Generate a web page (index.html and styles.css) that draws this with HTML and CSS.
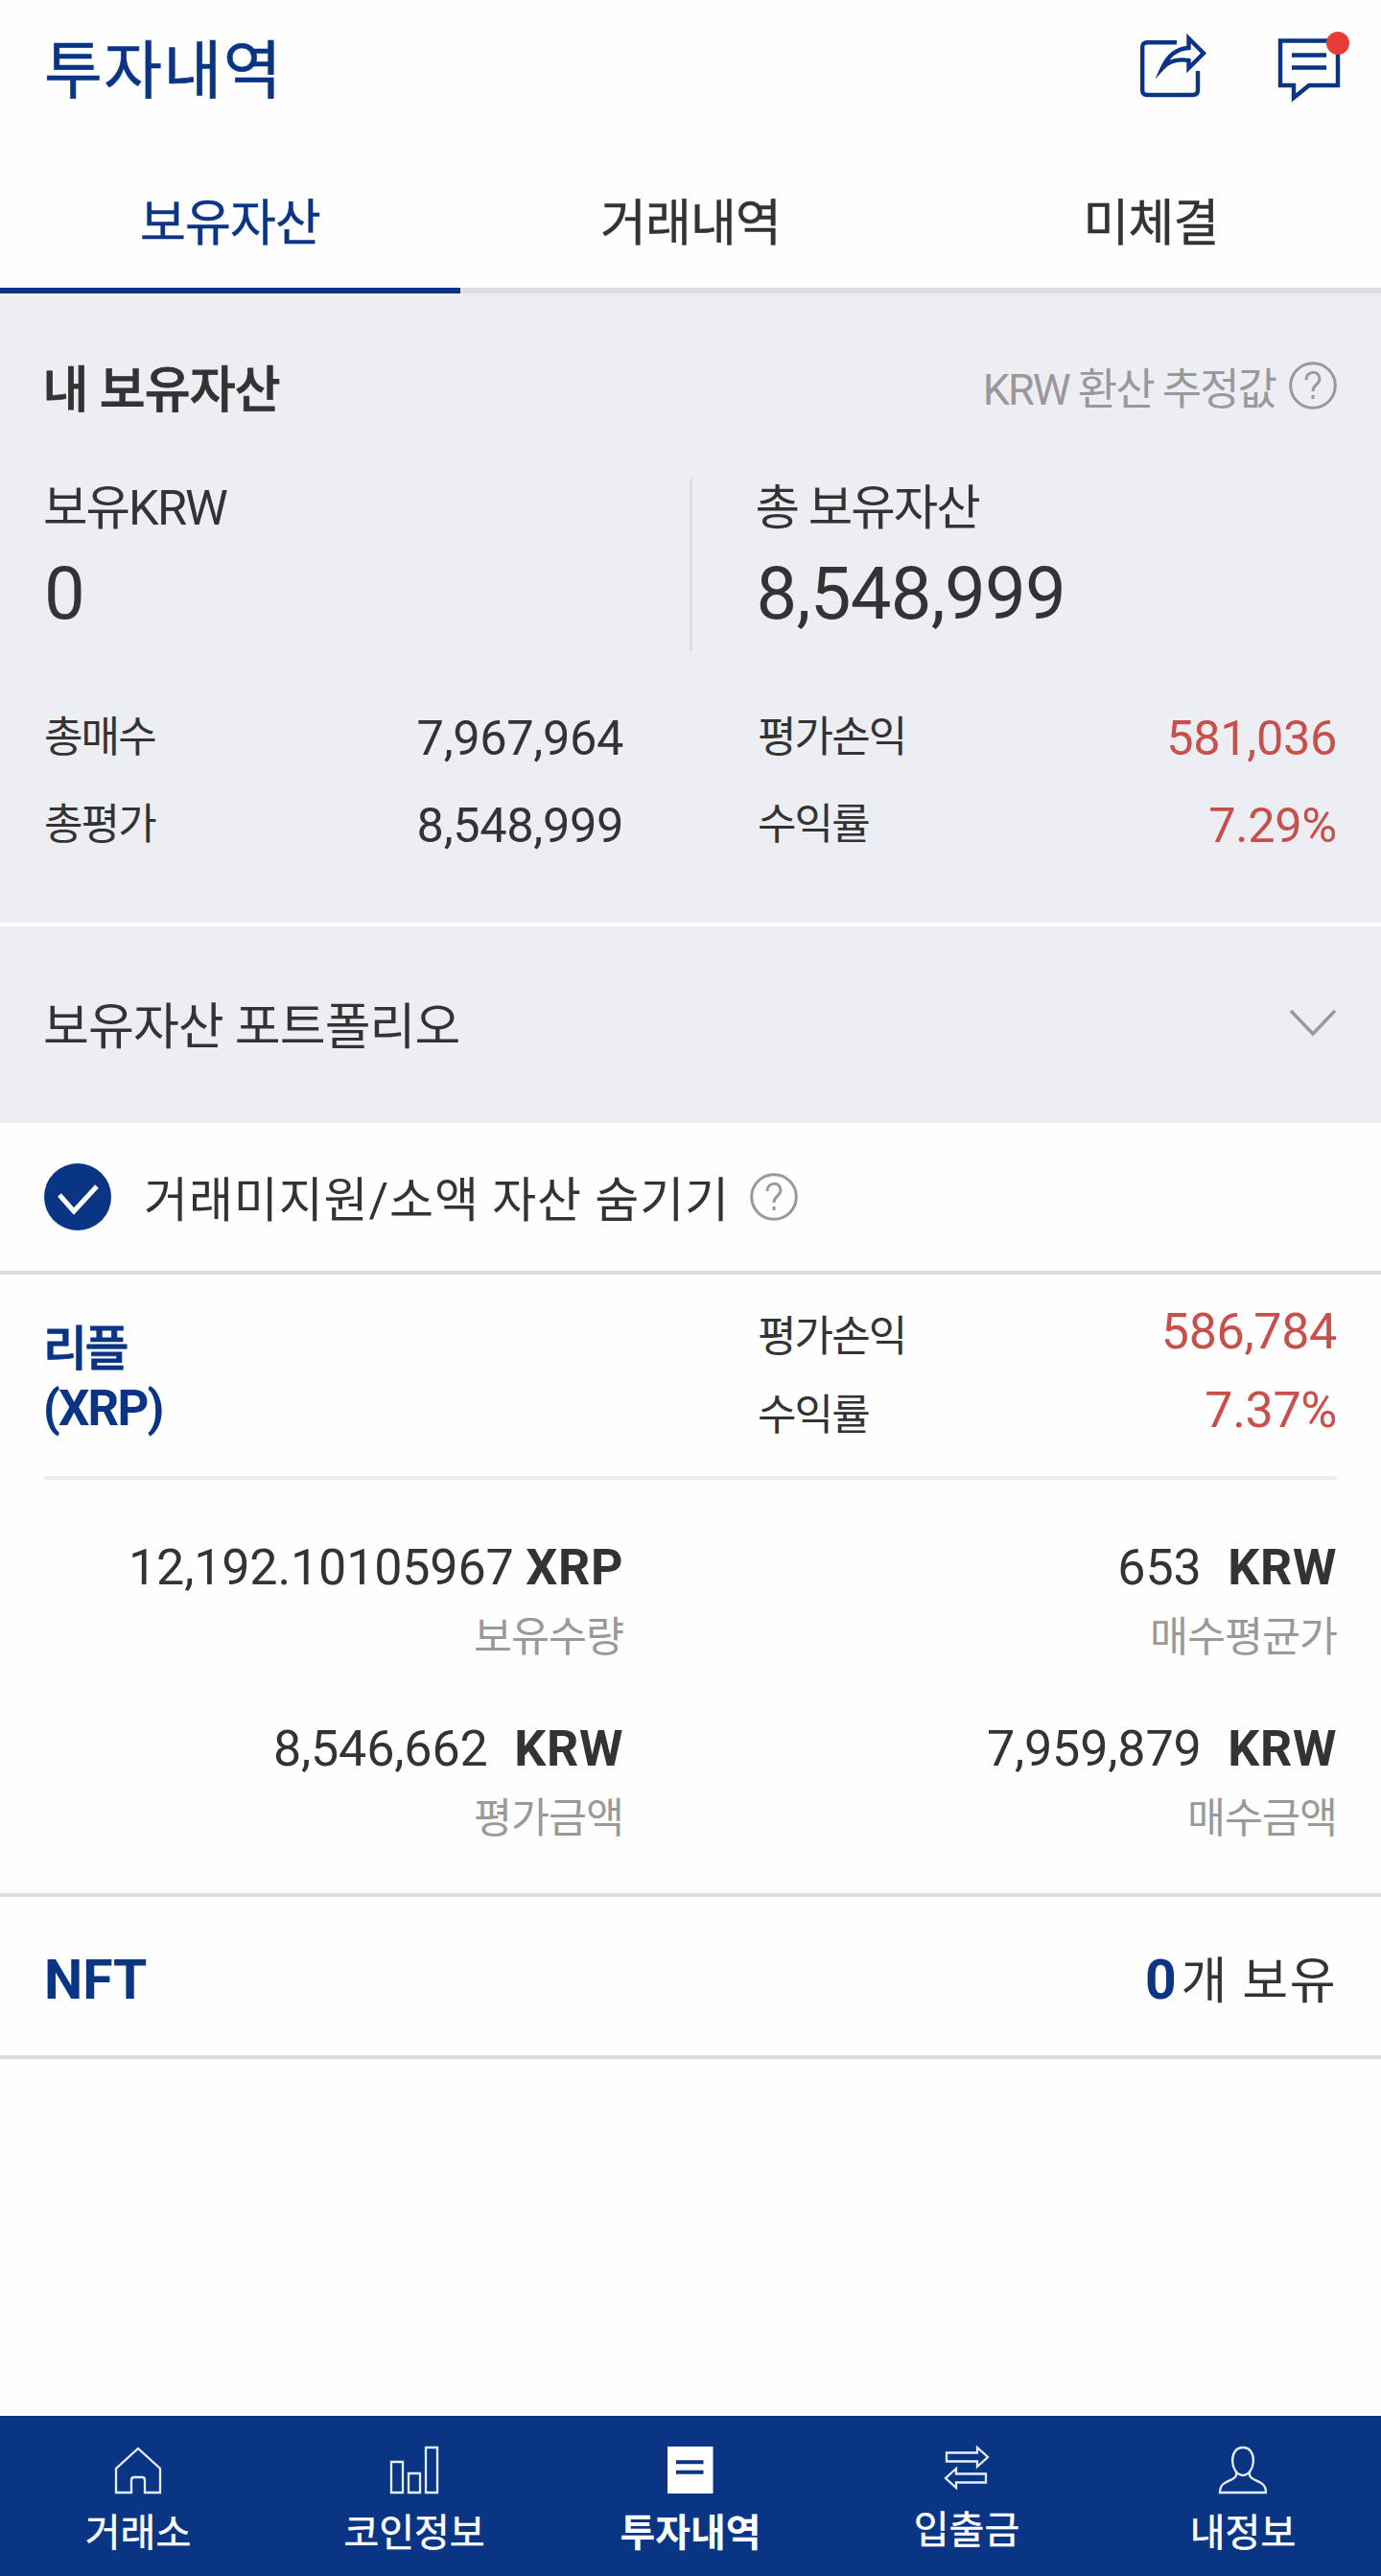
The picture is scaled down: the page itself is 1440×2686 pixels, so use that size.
FILE: index.html
```
<!DOCTYPE html>
<html lang="ko">
<head>
  <meta charset="UTF-8">
  <meta name="viewport" content="width=device-width, initial-scale=1.0">
  <title>투자내역</title>
  <link rel="stylesheet" href="styles.css">
</head>
<body>
  <header class="header">
    <h1>투자내역</h1>
    <div class="header-icons">
      <svg class="icon-share" width="72" height="72" viewBox="0 0 72 72">
        <path d="M42 8.3H11Q6.2 8.3 6.2 13V58Q6.2 63 11 63H59Q64 63 64 58V38"/>
        <path d="M54.5 4V14Q36 15 27 35Q37 24 54.5 27V35L70 19.5Z"/>
      </svg>
      <span class="message">
        <svg width="66" height="70" viewBox="0 0 66 70">
          <path d="M3 6.5H63V53H33L17 66V53H3Z"/>
          <path d="M15 21.5H51M15 34.5H51"/>
        </svg>
        <i class="dot"></i>
      </span>
    </div>
  </header>

  <nav class="tabs">
    <a class="active">보유자산</a>
    <a>거래내역</a>
    <a>미체결</a>
  </nav>

  <section class="assets">
    <div class="assets-head">
      <h2>내 보유자산</h2>
      <div class="estimate">
        <span>KRW 환산 추정값</span>
        <svg class="help" width="50" height="50" viewBox="0 0 50 50">
          <circle cx="25" cy="25" r="23.3"/>
          <path d="M18 19C18 9 32 9 32 18C32 24 25 24 25 31M25 35V39"/>
        </svg>
      </div>
    </div>
    <div class="totals">
      <div class="total">
        <p class="label">보유KRW</p>
        <p class="amount">0</p>
      </div>
      <div class="total">
        <p class="label">총 보유자산</p>
        <p class="amount">8,548,999</p>
      </div>
    </div>
    <div class="stats">
      <div class="stat"><span>총매수</span><b>7,967,964</b></div>
      <div class="stat"><span>평가손익</span><b class="up">581,036</b></div>
      <div class="stat"><span>총평가</span><b>8,548,999</b></div>
      <div class="stat"><span>수익률</span><b class="up">7.29%</b></div>
    </div>
  </section>

  <section class="portfolio">
    <span>보유자산 포트폴리오</span>
    <svg class="chevron" width="50" height="30" viewBox="0 0 50 30">
      <path d="M2 2L25 26L48 2"/>
    </svg>
  </section>

  <div class="filter">
    <svg class="check" width="70" height="70" viewBox="0 0 70 70">
      <circle cx="35" cy="35" r="35"/>
      <path d="M16 33L31 50L55 24"/>
    </svg>
    <span>거래미지원/소액 자산 숨기기</span>
    <svg class="help" width="50" height="50" viewBox="0 0 50 50">
      <circle cx="25" cy="25" r="23.3"/>
      <path d="M18 19C18 9 32 9 32 18C32 24 25 24 25 31M25 35V39"/>
    </svg>
  </div>

  <section class="coin">
    <div class="coin-head">
      <h3><span>리플</span><br>(XRP)</h3>
      <div class="coin-stats">
        <div class="stat"><span>평가손익</span><b class="up">586,784</b></div>
        <div class="stat"><span>수익률</span><b class="up">7.37%</b></div>
      </div>
    </div>
    <div class="holdings">
      <div class="holding">
        <p class="value">12,192.10105967 <b>XRP</b></p>
        <p class="name">보유수량</p>
      </div>
      <div class="holding">
        <p class="value">653 <b class="krw">KRW</b></p>
        <p class="name">매수평균가</p>
      </div>
      <div class="holding">
        <p class="value">8,546,662 <b class="krw">KRW</b></p>
        <p class="name">평가금액</p>
      </div>
      <div class="holding">
        <p class="value">7,959,879 <b class="krw">KRW</b></p>
        <p class="name">매수금액</p>
      </div>
    </div>
  </section>

  <section class="nft">
    <b>NFT</b>
    <span><b>0</b>개 보유</span>
  </section>

  <nav class="bottom-nav">
    <a>
      <svg width="60" height="56" viewBox="0 0 60 56">
        <path d="M30 5L53 26V51H37V38Q37 35 34 35H26Q23 35 23 38V51H7V26Z"/>
      </svg>
      <span>거래소</span>
    </a>
    <a>
      <svg width="60" height="56" viewBox="0 0 60 56">
        <path d="M6 19H18V51H6ZM24 31H36V51H24ZM42 4H54V51H42Z"/>
      </svg>
      <span>코인정보</span>
    </a>
    <a class="active">
      <svg width="60" height="56" viewBox="0 0 60 56">
        <path class="sheet" d="M6 3H53.5V52H6Z"/>
        <path class="lines" d="M15 19.2H43.5M15 29.7H43.5"/>
      </svg>
      <span>투자내역</span>
    </a>
    <a class="transfer">
      <svg width="60" height="56" viewBox="0 0 60 56">
        <path d="M9 9.5H41V4L52 14L41 24V18.5H9ZM50 40.5H19V46L8 36L19 26V31.5H50Z"/>
      </svg>
      <span>입출금</span>
    </a>
    <a>
      <svg width="60" height="56" viewBox="0 0 60 56">
        <path d="M37 29V33C39 40 54 37 54 51H6C6 37 21 40 23 33V29M30 4C14 4 17 33 30 33C43 33 46 4 30 4Z"/>
      </svg>
      <span>내정보</span>
    </a>
  </nav>
</body>
</html>
```

FILE: styles.css
```
* {
  box-sizing: border-box;
}

body {
  margin: 0;
  min-height: 2686px;
  display: flex;
  flex-direction: column;
  font-family: Roboto, "Noto Sans CJK KR", sans-serif;
  background: #fefefe;
  color: #333;
}

h1, h2, h3, p {
  margin: 0;
}

svg {
  display: block;
  fill: none;
  flex-shrink: 0;
  overflow: visible;
}

/* Header */
.header {
  height: 150px;
  padding: 0 42px 0 46px;
  display: flex;
  justify-content: space-between;
}

h1 {
  font-size: 66px;
  font-weight: 400;
  letter-spacing: 1.5px;
  line-height: 149px;
  color: #0a3585;
  -webkit-text-stroke: 0.6px;
}

.header-icons {
  display: flex;
  gap: 75px;
  padding-top: 36px;
  stroke: #0a3585;
  stroke-width: 4.4;
  stroke-miterlimit: 10;
}

.message {
  position: relative;
}

.dot {
  position: absolute;
  top: -3px;
  right: -9px;
  width: 24px;
  height: 24px;
  border-radius: 50%;
  background: #e83b35;
}

/* Tabs */
.tabs {
  display: grid;
  grid-template-columns: repeat(3, 1fr);
  height: 156px;
}

.tabs a {
  text-align: center;
  font-size: 52px;
  letter-spacing: -0.8px;
  line-height: 168px;
  height: 156px;
  border-bottom: 6px solid #dcdddf;
  -webkit-text-stroke: 0.4px;
}

.tabs .active {
  color: #0a3585;
  border-color: #0a3585;
}

/* Summary */
.assets {
  height: 656px;
  padding: 0 46px;
  background: #edeef4;
}

.assets-head {
  display: flex;
  justify-content: space-between;
  align-items: center;
  height: 193px;
  padding-bottom: 1px;
}

h2 {
  margin-left: -1.5px;
  font-size: 52px;
  font-weight: 500;
  letter-spacing: -0.8px;
  -webkit-text-stroke: 0.8px;
}

.estimate {
  display: flex;
  align-items: center;
  gap: 14px;
  font-size: 45px;
  letter-spacing: -2px;
  color: #999;
}

.help {
  stroke: #999;
  stroke-width: 3;
}

.totals {
  display: grid;
  grid-template-columns: 1fr 1fr;
  height: 178px;
}

.total + .total {
  margin-left: -1.5px;
  border-left: 3px solid #dcdddf;
  padding-left: 67px;
}

.label {
  margin-left: -1px;
  font-size: 50.5px;
  letter-spacing: -1.9px;
  line-height: 62px;
}

.amount {
  font-size: 76px;
  letter-spacing: -0.7px;
  line-height: 117px;
}

.stats {
  display: grid;
  grid-template-columns: 604px 604px;
  justify-content: space-between;
  padding-top: 47px;
}

.stat {
  display: flex;
  justify-content: space-between;
  height: 90.5px;
  line-height: 91px;
}

.stat span {
  font-size: 44px;
  letter-spacing: -1.9px;
}

.stat b {
  font-size: 50.5px;
  font-weight: 400;
  letter-spacing: -0.35px;
}

.stat .up {
  color: #c8504a;
}

.portfolio {
  display: flex;
  justify-content: space-between;
  align-items: center;
  height: 209px;
  padding: 0 46px 4px 45px;
  border-top: 4px solid #fefefe;
  background: #edeef4;
  font-size: 52px;
  letter-spacing: -0.9px;
}

.chevron {
  stroke: #999;
  stroke-width: 3.6;
}

/* Hide small assets */
.filter {
  display: flex;
  align-items: center;
  height: 158px;
  padding: 0 46px;
  border-bottom: 4px solid #dcdcdc;
  font-size: 50px;
  letter-spacing: 0.9px;
}

.filter span {
  margin: 0 21px 2px 34px;
}

.check {
  fill: #0a3585;
}

.check path {
  fill: none;
  stroke: #fff;
  stroke-width: 5;
}

/* Coin */
.coin {
  height: 649px;
  padding: 0 46px;
  border-bottom: 4px solid #dcdcdc;
}

.coin-head {
  display: flex;
  justify-content: space-between;
  height: 214px;
  border-bottom: 4px solid #eee;
}

h3 {
  margin-left: -1px;
  padding-top: 47px;
  font-size: 51px;
  font-weight: 700;
  letter-spacing: -1.8px;
  line-height: 61px;
  color: #0a3585;
}

h3 span {
  font-size: 50px;
  font-weight: 500;
  letter-spacing: -2.5px;
  -webkit-text-stroke: 0.8px;
}

.coin-stats {
  width: 604px;
  padding-top: 19px;
}

.coin-stats .stat {
  height: 82px;
  line-height: 82px;
}

.coin-stats .stat span {
  margin-top: 5px;
}

.coin-stats .stat b {
  font-size: 52px;
}

.holdings {
  display: grid;
  grid-template-columns: 604px 604px;
  justify-content: space-between;
  padding-top: 55px;
}

.holding {
  height: 189px;
  text-align: right;
}

.value {
  font-size: 52px;
  letter-spacing: -0.15px;
  line-height: 74px;
}

.value b {
  letter-spacing: 0.6px;
}

.krw {
  margin-left: 15px;
}

.name {
  font-size: 43.5px;
  letter-spacing: -1px;
  line-height: 71px;
  color: #999;
}

.nft {
  display: flex;
  justify-content: space-between;
  height: 169px;
  padding: 0 46px;
  border-bottom: 4px solid #dcdcdc;
  font-size: 52px;
  letter-spacing: 1.5px;
  line-height: 173px;
}

.nft b {
  font-size: 57px;
  letter-spacing: 0;
  color: #0a3585;
}

.nft span b {
  margin-right: 5px;
}

/* Bottom navigation */
.bottom-nav {
  display: grid;
  grid-template-columns: repeat(5, 1fr);
  height: 167px;
  margin-top: auto;
  background: #0a3585;
  color: #fff;
}

.bottom-nav a {
  display: flex;
  flex-direction: column;
  align-items: center;
  padding-top: 29px;
  font-size: 40px;
  line-height: 75px;
  -webkit-text-stroke: 0.5px;
}

.bottom-nav .transfer {
  line-height: 70px;
}

.bottom-nav svg {
  stroke: #e4efff;
  stroke-width: 2.3;
}

.bottom-nav .active {
  font-weight: 700;
  -webkit-text-stroke: 0;
}

.bottom-nav .sheet {
  fill: #fff;
  stroke: none;
}

.bottom-nav .lines {
  stroke: #0a3585;
  stroke-width: 4;
}
```
